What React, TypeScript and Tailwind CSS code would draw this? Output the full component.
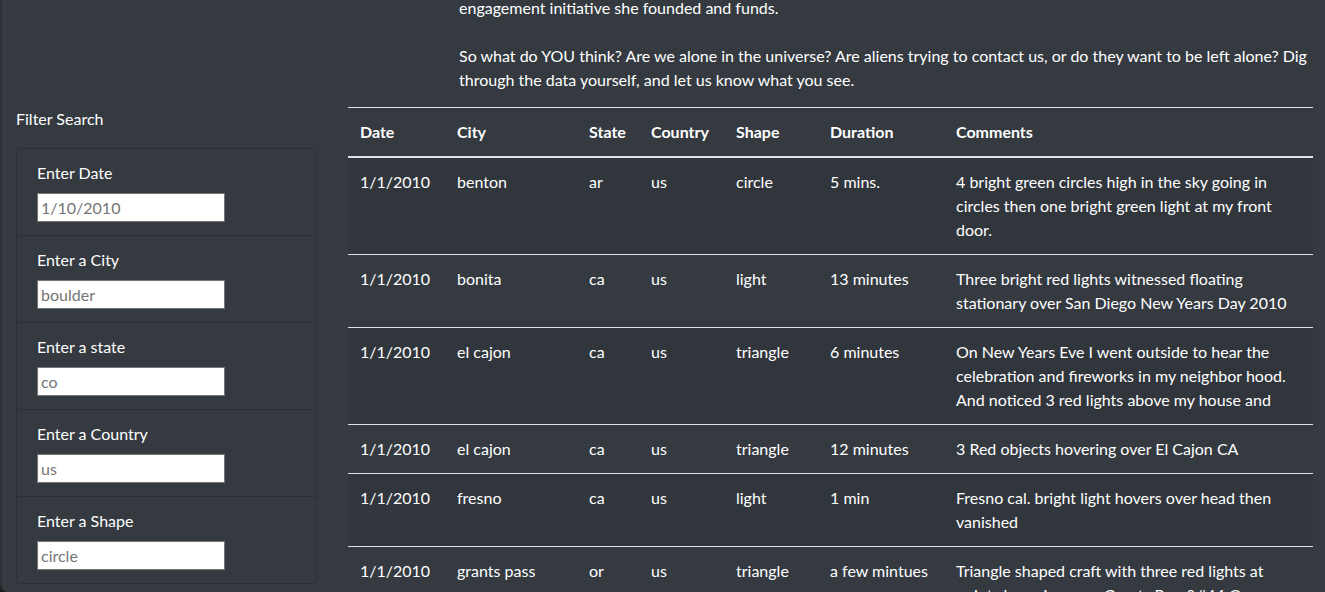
import React from "react";

type Sighting = {
  date: string;
  city: string;
  state: string;
  country: string;
  shape: string;
  duration: string;
  comments: string[];
};

const sightings: Sighting[] = [
  {
    date: "1/1/2010",
    city: "benton",
    state: "ar",
    country: "us",
    shape: "circle",
    duration: "5 mins.",
    comments: [
      "4 bright green circles high in the sky going in",
      "circles then one bright green light at my front",
      "door.",
    ],
  },
  {
    date: "1/1/2010",
    city: "bonita",
    state: "ca",
    country: "us",
    shape: "light",
    duration: "13 minutes",
    comments: [
      "Three bright red lights witnessed floating",
      "stationary over San Diego New Years Day 2010",
    ],
  },
  {
    date: "1/1/2010",
    city: "el cajon",
    state: "ca",
    country: "us",
    shape: "triangle",
    duration: "6 minutes",
    comments: [
      "On New Years Eve I went outside to hear the",
      "celebration and fireworks in my neighbor hood.",
      "And noticed 3 red lights above my house and",
    ],
  },
  {
    date: "1/1/2010",
    city: "el cajon",
    state: "ca",
    country: "us",
    shape: "triangle",
    duration: "12 minutes",
    comments: ["3 Red objects hovering over El Cajon CA"],
  },
  {
    date: "1/1/2010",
    city: "fresno",
    state: "ca",
    country: "us",
    shape: "light",
    duration: "1 min",
    comments: ["Fresno cal. bright light hovers over head then", "vanished"],
  },
  {
    date: "1/1/2010",
    city: "grants pass",
    state: "or",
    country: "us",
    shape: "triangle",
    duration: "a few mintues",
    comments: [
      "Triangle shaped craft with three red lights at",
      "points hovering over Grants Pass&#44 Oregon",
    ],
  },
];

const filters = [
  { label: "Enter Date", placeholder: "1/10/2010" },
  { label: "Enter a City", placeholder: "boulder" },
  { label: "Enter a state", placeholder: "co" },
  { label: "Enter a Country", placeholder: "us" },
  { label: "Enter a Shape", placeholder: "circle" },
];

const headers = ["Date", "City", "State", "Country", "Shape", "Duration", "Comments"];
const colWidths = ["w-[97px]", "w-[132px]", "w-[62px]", "w-[85px]", "w-[94px]", "w-[126px]", "w-[369px]"];

const App: React.FC = () => {
  return (
    <div className="h-[592px] w-[1325px] overflow-hidden bg-[#1c1c1c]">
      <div
        className="flex h-full overflow-hidden rounded-bl-[8px] border-l-2 border-[#2c3136] bg-[#343a40] text-white text-[16px] leading-6"
        style={{ fontFamily: "Lato, 'Noto Sans', sans-serif" }}
      >
        {/* filter column */}
        <div className="w-[329px] shrink-0 pl-[14px] pr-[12px] pt-[107px]">
          <p className="mb-[17px]">Filter Search</p>
          <ul className="w-[301px] rounded border border-[#2b3035]">
            {filters.map((f, i) => (
              <li
                key={f.label}
                className={`px-5 pt-3 pb-[13px] ${i < filters.length - 1 ? "border-b border-[#2b3035]" : ""}`}
              >
                <label className="block mb-2">{f.label}</label>
                <input
                  type="text"
                  placeholder={f.placeholder}
                  className="block h-[29px] w-[188px] border border-[#767676] bg-white px-[3px] text-[16px] text-black placeholder:text-[#757575] focus:outline-none"
                />
              </li>
            ))}
          </ul>
        </div>

        {/* data column */}
        <div className="flex-1 pl-[17px]">
          <div className="-mt-1 mb-[15px] pl-[111px] whitespace-nowrap">
            <p className="mb-6">engagement initiative she founded and funds.</p>
            <p>
              So what do YOU think? Are we alone in the universe? Are aliens trying to contact us, or do they want to be left alone? Dig
              <br />
              through the data yourself, and let us know what you see.
            </p>
          </div>

          <table className="w-[965px] table-fixed border-separate border-spacing-0 text-left">
            <colgroup>
              {colWidths.map((w, i) => (
                <col key={i} className={w} />
              ))}
            </colgroup>
            <thead>
              <tr>
                {headers.map((h) => (
                  <th
                    key={h}
                    className="border-t border-b-2 border-[#dee2e6] p-3 font-bold whitespace-nowrap"
                  >
                    {h}
                  </th>
                ))}
              </tr>
            </thead>
            <tbody>
              {sightings.map((s, i) => {
                const cell = `p-3 align-top whitespace-nowrap ${i > 0 ? "border-t border-[#dee2e6]" : ""}`;
                return (
                  <tr key={i} className={i % 2 === 0 ? "bg-[#31363c]" : ""}>
                    <td className={cell}>{s.date}</td>
                    <td className={cell}>{s.city}</td>
                    <td className={cell}>{s.state}</td>
                    <td className={cell}>{s.country}</td>
                    <td className={cell}>{s.shape}</td>
                    <td className={cell}>{s.duration}</td>
                    <td className={cell}>
                      {s.comments.map((line, j) => (
                        <div key={j}>{line}</div>
                      ))}
                    </td>
                  </tr>
                );
              })}
            </tbody>
          </table>
        </div>
      </div>
    </div>
  );
};

export default App;
